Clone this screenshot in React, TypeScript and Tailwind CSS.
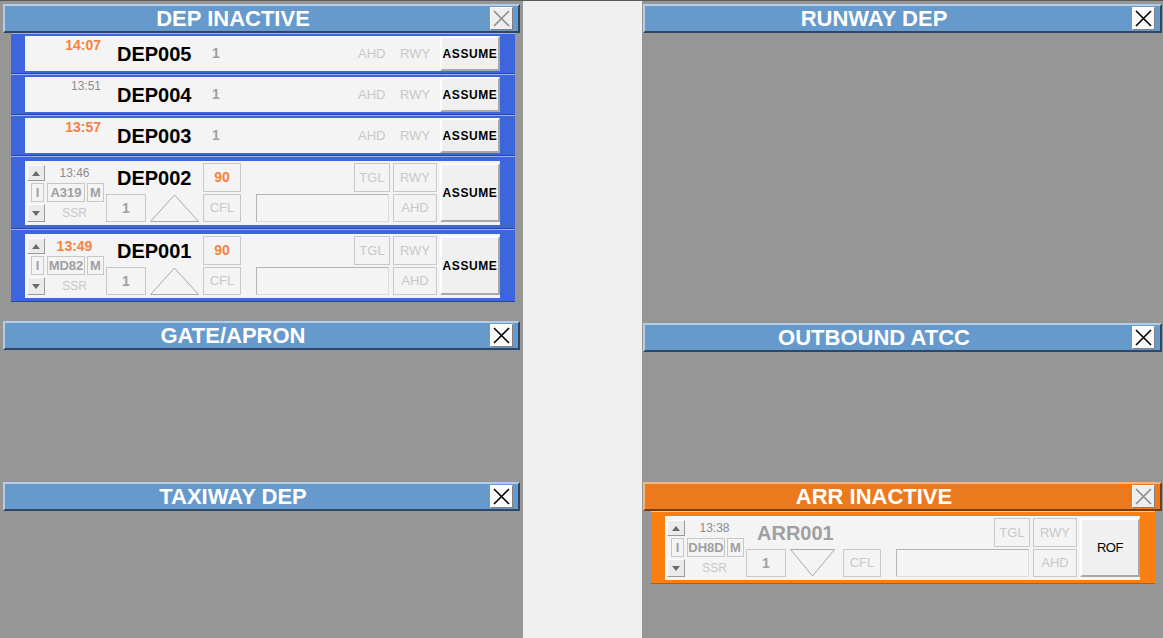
import React from 'react';

type StripColor = 'blue' | 'orange';

const BOX = 'flex items-center justify-center border border-[#c8c8c8]';

function CloseBtn({ disabled }: { disabled?: boolean }) {
  return (
    <div
      className={`flex h-[23px] w-[23px] items-center justify-center border border-t-white border-l-white border-b-[#808080] border-r-[#808080] ${
        disabled ? 'bg-[#eeeeee]' : 'bg-[#fbfbfb]'
      }`}
    >
      <svg width="19" height="19" viewBox="0 0 19 19">
        <path d="M2 2 L17 17 M17 2 L2 17" stroke={disabled ? '#8c8c8c' : '#000'} strokeWidth="1.6" />
      </svg>
    </div>
  );
}

function Header({ title, orange, disabled }: { title: string; orange?: boolean; disabled?: boolean }) {
  const c = orange
    ? 'bg-[#eb7a1e] border-t-[#f4b47e] border-l-[#f4b47e] border-b-[#7a3c0c] border-r-[#7a3c0c]'
    : 'bg-[#6699cc] border-t-[#b4cde6] border-l-[#b4cde6] border-b-[#2c4866] border-r-[#2c4866]';
  return (
    <div className={`flex h-[29px] items-center border-2 ${c}`}>
      <div className="flex-1 text-center text-[22px] font-bold leading-none text-white">{title}</div>
      <div className="flex w-[57px] justify-end pr-[5px]">
        <CloseBtn disabled={disabled} />
      </div>
    </div>
  );
}

function StripFrame({ color, expanded, children }: { color: StripColor; expanded?: boolean; children: React.ReactNode }) {
  const c =
    color === 'orange'
      ? 'bg-[#fb7e10] border-t-[#ffc58f] border-b-[#b85a08]'
      : 'bg-[#3f65dc] border-t-[#9db0f2] border-b-[#2844b0]';
  return (
    <div className={`w-[504px] border-t border-b pl-[14px] pr-[15px] ${expanded ? 'pt-[4px] pb-[3px]' : 'pt-[2px] pb-[2px]'} ${c}`}>
      {children}
    </div>
  );
}

function Button({ children, className = '', small }: { children: React.ReactNode; className?: string; small?: boolean }) {
  return (
    <div
      className={`flex items-center justify-center border-2 border-t-white border-l-white border-b-[#a8a8a8] border-r-[#a8a8a8] bg-[#f0f0f0] text-black ${
        small ? 'text-[13px] tracking-[-0.4px]' : 'text-[12px] font-bold tracking-[0.6px]'
      } ${className}`}
    >
      {children}
    </div>
  );
}

function ArrowBtn({ dir, className = '' }: { dir: 'up' | 'down'; className?: string }) {
  return (
    <div
      className={`flex w-[18px] items-center justify-center border border-t-white border-l-white border-b-[#9a9a9a] border-r-[#9a9a9a] bg-[#ebebeb] ${className}`}
    >
      <div
        className={
          dir === 'up'
            ? 'h-0 w-0 border-x-[4px] border-b-[5px] border-x-transparent border-b-[#6a6a6a]'
            : 'h-0 w-0 border-x-[4px] border-t-[5px] border-x-transparent border-t-[#6a6a6a]'
        }
      />
    </div>
  );
}

function Time({ time, hot }: { time: string; hot: boolean }) {
  return (
    <div className={hot ? 'text-[14px] font-bold leading-[14px] text-[#f7823f]' : 'text-[12px] leading-[14px] text-[#8c8c8c]'}>
      {time}
    </div>
  );
}

function CompactStrip({ time, hot, cs }: { time: string; hot: boolean; cs: string }) {
  return (
    <StripFrame color="blue">
      <div className="flex h-[35px] w-[475px] bg-[#f4f4f4]">
        <div className="flex w-[76px] justify-end pt-[2px]">
          <Time time={time} hot={hot} />
        </div>
        <div className="ml-[16px] flex w-[95px] items-center text-[20px] font-bold leading-none text-black">{cs}</div>
        <div className="flex w-[146px] items-center text-[14px] font-bold text-[#a0a0a0]">1</div>
        <div className="flex w-[42px] items-center text-[13px] text-[#c8c8c8]">AHD</div>
        <div className="flex w-[40px] items-center text-[13px] text-[#c8c8c8]">RWY</div>
        <Button className="h-[35px] w-[60px]">ASSUME</Button>
      </div>
    </StripFrame>
  );
}

type Exp = {
  color: StripColor;
  time: string;
  hot: boolean;
  type: string;
  cs: string;
  csGray?: boolean;
  dir: 'up' | 'down';
  top90?: boolean;
  button: string;
};

function ExpandedStrip({ color, time, hot, type, cs, csGray, dir, top90, button }: Exp) {
  return (
    <StripFrame color={color} expanded>
      <div className="flex h-[64px] w-[475px] items-start bg-[#f4f4f4] pt-[2px]">
        <div className="ml-[2px] flex w-[77px] flex-col">
          <div className="flex h-[18px] items-end">
            <ArrowBtn dir="up" className="h-[16px]" />
            <div className="flex h-[18px] flex-1 items-center justify-center pt-[2px]">
              <Time time={time} hot={hot} />
            </div>
          </div>
          <div className="mt-[2px] flex h-[19px] text-[13px] font-bold text-[#a0a0a0]">
            <div className={`${BOX} ml-[4px] w-[13px]`}>I</div>
            <div className={`${BOX} ml-[3px] w-[38px]`}>{type}</div>
            <div className={`${BOX} ml-[2px] w-[17px]`}>M</div>
          </div>
          <div className="mt-[2px] flex h-[18px] items-center">
            <ArrowBtn dir="down" className="h-[18px]" />
            <div className="flex-1 text-center text-[12px] leading-none text-[#c8c8c8]">SSR</div>
          </div>
        </div>
        <div className="ml-[2px] flex w-[94px] flex-col">
          <div className={`flex h-[29px] items-center pl-[11px] text-[20px] font-bold leading-none ${csGray ? 'text-[#a0a0a0]' : 'text-black'}`}>
            {cs}
          </div>
          <div className="mt-[2px] flex h-[28px]">
            <div className={`${BOX} w-[40px] text-[14px] font-bold text-[#a0a0a0]`}>1</div>
            <svg className="ml-[4px]" width="49" height="28" viewBox="0 0 49 28">
              {dir === 'up' ? (
                <path d="M0.5 27.5 L24.5 1 L48.5 27.5 Z" fill="none" stroke="#a8a8a8" strokeWidth="1" />
              ) : (
                <path d="M0.5 0.5 L22.5 27 L44.5 0.5 Z" fill="none" stroke="#a8a8a8" strokeWidth="1" />
              )}
            </svg>
          </div>
        </div>
        <div className="ml-[3px] flex w-[38px] flex-col">
          {top90 ? <div className={`${BOX} h-[29px] text-[14px] font-bold text-[#f7823f]`}>90</div> : <div className="h-[29px]" />}
          <div className={`${BOX} mt-[2px] h-[28px] text-[13px] text-[#c8c8c8]`}>CFL</div>
        </div>
        <div className="ml-[15px] flex w-[134px] flex-col">
          <div className="flex h-[29px] justify-end">
            <div className={`${BOX} w-[36px] text-[13px] text-[#c8c8c8]`}>TGL</div>
          </div>
          <div className="mt-[2px] h-[28px] w-[133px] border border-t-[#b4b4b4] border-l-[#b4b4b4] border-b-[#dcdcdc] border-r-[#dcdcdc]" />
        </div>
        <div className="ml-[3px] flex w-[44px] flex-col text-[13px] text-[#c8c8c8]">
          <div className={`${BOX} h-[29px]`}>RWY</div>
          <div className={`${BOX} mt-[2px] h-[28px]`}>AHD</div>
        </div>
        <Button className="ml-[3px] h-[59px] w-[60px]" small={button === 'ROF'}>
          {button}
        </Button>
      </div>
    </StripFrame>
  );
}

const compact = [
  { time: '14:07', hot: true, cs: 'DEP005' },
  { time: '13:51', hot: false, cs: 'DEP004' },
  { time: '13:57', hot: true, cs: 'DEP003' },
];

export default function App() {
  return (
    <div className="flex h-[638px] w-[1163px] overflow-hidden border-t border-[#5a5a5a] font-['Liberation_Sans',Arial,sans-serif]">
      {/* left column */}
      <div className="flex w-[523px] flex-col bg-[#969696]">
        <div className="h-[316px] px-[3px] pt-[3px]">
          <Header title="DEP INACTIVE" disabled />
          <div className="ml-[8px] flex flex-col">
            {compact.map((s) => (
              <CompactStrip key={s.cs} {...s} />
            ))}
            <ExpandedStrip color="blue" time="13:46" hot={false} type="A319" cs="DEP002" dir="up" top90 button="ASSUME" />
            <ExpandedStrip color="blue" time="13:49" hot type="MD82" cs="DEP001" dir="up" top90 button="ASSUME" />
          </div>
        </div>
        <div className="h-[161px] px-[3px] pt-[4px]">
          <Header title="GATE/APRON" />
        </div>
        <div className="flex-1 px-[3px] pt-[4px]">
          <Header title="TAXIWAY DEP" />
        </div>
      </div>

      {/* middle gap */}
      <div className="w-[119px] bg-[#f0f0f0]" />

      {/* right column */}
      <div className="flex w-[521px] flex-col bg-[#969696]">
        <div className="h-[318px] px-[1px] pt-[3px]">
          <Header title="RUNWAY DEP" />
        </div>
        <div className="h-[159px] px-[1px] pt-[4px]">
          <Header title="OUTBOUND ATCC" />
        </div>
        <div className="flex-1 px-[1px] pt-[4px]">
          <Header title="ARR INACTIVE" orange disabled />
          <div className="ml-[8px] flex flex-col">
            <ExpandedStrip color="orange" time="13:38" hot={false} type="DH8D" cs="ARR001" csGray dir="down" button="ROF" />
          </div>
        </div>
      </div>
    </div>
  );
}
